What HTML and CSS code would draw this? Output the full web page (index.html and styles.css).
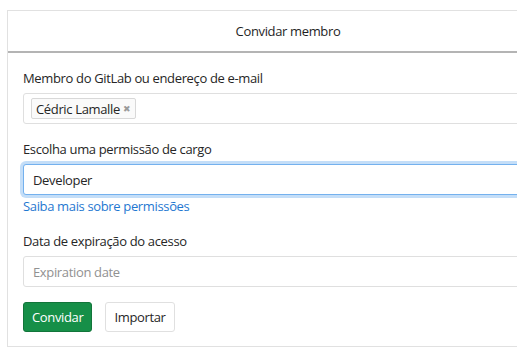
FILE: index.html
```html
<!DOCTYPE html>
<html lang="pt">
<head>
<meta charset="utf-8">
<title>Convidar membro</title>
<link rel="stylesheet" href="styles.css">
</head>
<body>
<div class="panel">
  <div class="panel-header">Convidar membro</div>
  <form class="panel-body">
    <div class="form-group">
      <label class="label">Membro do GitLab ou endereço de e-mail</label>
      <div class="token-input">
        <span class="token">Cédric Lamalle <span class="token-remove">&#x2716;</span></span>
      </div>
    </div>
    <div class="form-group">
      <label class="label">Escolha uma permissão de cargo</label>
      <select class="select">
        <option>Developer</option>
      </select>
      <a class="help-link" href="#">Saiba mais sobre permissões</a>
    </div>
    <div class="form-group">
      <label class="label">Data de expiração do acesso</label>
      <input class="input" type="text" placeholder="Expiration date">
    </div>
    <div class="actions">
      <button type="button" class="btn btn-success">Convidar</button>
      <button type="button" class="btn btn-default">Importar</button>
    </div>
  </form>
</div>
</body>
</html>
```

FILE: styles.css
```css
html {
  overflow: hidden;
}
body {
  margin: 0;
  padding: 10px 0 0 7px;
  font-family: "Open Sans", "Noto Sans", sans-serif;
  font-size: 13px;
  letter-spacing: -0.35px;
  color: #262626;
  background: #fff;
}
.panel {
  width: 560px;
  border: 1px solid #e1e1e1;
  background: #fff;
}
.panel-header {
  height: 40px;
  line-height: 40px;
  text-align: center;
  font-size: 13px;
  color: #1f1f1f;
  border-bottom: 2px solid #b4b4b4;
}
.panel-body {
  padding: 15px 15px 14px 15px;
  margin: 0;
}
.form-group {
  margin-bottom: 15px;
}
.label {
  display: block;
  line-height: 20px;
  margin-bottom: 5px;
  color: #262626;
}
.token-input {
  box-sizing: border-box;
  height: 31px;
  border: 1px solid #dfdfdf;
  border-radius: 3px;
  padding: 5px 7px;
  display: flex;
  align-items: center;
}
.token {
  display: inline-flex;
  align-items: center;
  height: 19px;
  padding: 0 4px;
  border: 1px solid #d8d8d8;
  border-radius: 2px;
  background: #fafafa;
  color: #262626;
  font-size: 13px;
}
.token-remove {
  font-size: 9px;
  color: #9a9a9a;
  margin-left: 3px;
}
.select,
.input {
  display: block;
  box-sizing: border-box;
  width: 100%;
  height: 31px;
  padding: 0 9px;
  font-family: inherit;
  font-size: 13px;
  letter-spacing: -0.35px;
  color: #262626;
  background: #fff;
  border: 1px solid #dfdfdf;
  border-radius: 3px;
  outline: none;
}
.select {
  -webkit-appearance: none;
  appearance: none;
  border-color: #74b1ee;
  box-shadow: 0 0 0 3px #c4def8;
  margin-bottom: 2px;
}
.input::placeholder {
  color: #919191;
}
.help-link {
  display: block;
  line-height: 19px;
  color: #1f78d1;
  text-decoration: none;
}
.actions {
  display: flex;
  gap: 13px;
}
.btn {
  box-sizing: border-box;
  height: 30px;
  padding: 0 8px;
  font-family: inherit;
  font-size: 13px;
  letter-spacing: -0.35px;
  border-radius: 3px;
  border: 1px solid transparent;
}
.btn-success {
  background: #168f48;
  border-color: #12753a;
  color: #fff;
}
.btn-default {
  background: #fff;
  border-color: #e0e0e0;
  color: #262626;
}
```
